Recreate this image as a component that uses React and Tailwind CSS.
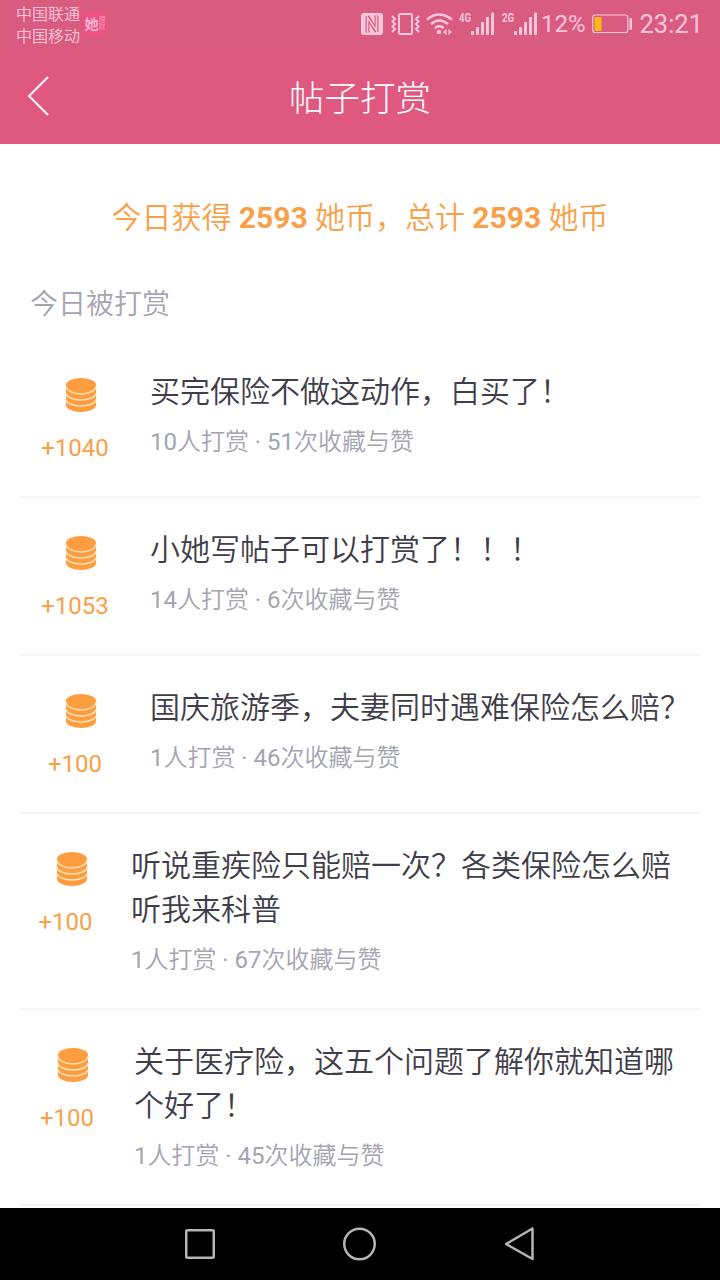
const coinPosts = [
  {
    amount: '+1040',
    title: '买完保险不做这动作，白买了！',
    rewards: 10,
    likes: 51,
    width: 'w-[110px]'
  },
  {
    amount: '+1053',
    title: '小她写帖子可以打赏了！！！',
    rewards: 14,
    likes: 6,
    width: 'w-[110px]'
  },
  {
    amount: '+100',
    title: '国庆旅游季，夫妻同时遇难保险怎么赔？',
    rewards: 1,
    likes: 46,
    width: 'w-[110px]'
  },
  {
    amount: '+100',
    title: '听说重疾险只能赔一次？各类保险怎么赔听我来科普',
    rewards: 1,
    likes: 67,
    width: 'w-[91px]'
  },
  {
    amount: '+100',
    title: '关于医疗险，这五个问题了解你就知道哪个好了！',
    rewards: 1,
    likes: 45,
    width: 'w-[94px]'
  }
];

function Signal({ label }) {
  return (
    <svg width="36" height="26" viewBox="0 0 36 26" fill="#fbc5dc">
      <text x="0" y="11" fontSize="12" fontWeight="700" textLength="12" lengthAdjust="spacingAndGlyphs">
        {label}
      </text>
      <rect x="12" y="20" width="3" height="4" rx="1" />
      <rect x="17" y="16" width="3" height="8" rx="1" />
      <rect x="22" y="11" width="3" height="13" rx="1" />
      <rect x="27" y="6" width="3" height="18" rx="1" />
      <rect x="32" y="1.500" width="3" height="22.500" rx="1" />
    </svg>
  );
}

function StatusBar() {
  return (
    <div className="flex h-12 items-start bg-[#d95c80] text-[#fbc5dc]">
      <div className="ml-4 mt-1 text-[16px] font-[350] leading-[21.5px]">
        <div>中国联通</div>
        <div>中国移动</div>
      </div>
      <div className="ml-[3px] mt-3 flex h-6 w-6 items-center justify-center rounded-[3px] bg-[#ee5283]">
        <span className="text-[14px] font-medium leading-none">她</span>
        <span className="w-[7px] text-[7px] leading-[7px] text-[#f79bbb]">理财</span>
      </div>
      <div className="ml-auto mr-[17px] flex h-12 items-center">
        {/* NFC */}
        <svg width="22" height="22" viewBox="0 0 22 22">
          <rect width="22" height="22" rx="3" fill="#fbc5dc" />
          <path
            d="M6.500 19.500V3.500L15.500 18.500V2.500"
            fill="none"
            stroke="#d95c80"
            strokeWidth="4"
            strokeLinejoin="bevel"
          />
          <path d="M6.500 19.500V4.500L15.500 17.500V2.500" fill="none" stroke="#fbc5dc" strokeWidth="1.600" />
        </svg>
        {/* Vibrate */}
        <svg className="ml-2" width="29" height="22" viewBox="0 0 29 22" fill="none" stroke="#fbc5dc" strokeWidth="2">
          <rect x="8" y="1" width="13" height="20" rx="1.5" />
          <path d="M1 3L4 6L1.500 8.500L4 11L1.500 13.500L4 16L1 19M28 3L25 6L27.500 8.500L25 11L27.500 13.500L25 16L28 19" />
        </svg>
        {/* Wi-Fi */}
        <svg className="ml-1.5" width="27" height="22" viewBox="0 0 27 22" fill="none" stroke="#fbc5dc" strokeWidth="2.4">
          <path d="M1 6.500Q13 -3.500 26 6.500M5 11Q13 4 22 11M9 15Q13 11.500 18 15" />
          <circle cx="13" cy="19" r="2.200" fill="#fbc5dc" stroke="none" />
          <path d="M17 19L20.500 16V22ZM26 19L22.500 16V22Z" fill="#fbc5dc" stroke="none" />
        </svg>
        <div className="ml-1.5">
          <Signal label="4G" />
        </div>
        <div className="ml-[7px]">
          <Signal label="2G" />
        </div>
        <span className="ml-[3px] text-[24px] leading-none">12%</span>
        <svg className="ml-[7px]" width="41" height="20" viewBox="0 0 41 20">
          <rect x="0.750" y="1" width="35" height="17.500" rx="2.500" fill="none" stroke="#fbc5dc" strokeWidth="1.200" />
          <rect x="2.500" y="3" width="7" height="14" rx="1" fill="#fcb814" />
          <rect x="37.500" y="4" width="2.500" height="12" rx="1" fill="#fbc5dc" />
        </svg>
        <span className="ml-[6px] mt-0.5 text-[25.5px] leading-none">23:21</span>
      </div>
    </div>
  );
}

function CoinStack() {
  return (
    <svg className="ml-3" width="32" height="36" viewBox="0 0 32 36">
      <path d="M1 8V28C1 32 8 35 16 35S31 32 31 28V8Z" fill="#fe9d3f" />
      <ellipse cx="16" cy="8" rx="15" ry="7" fill="#fe9d3f" />
      <path
        d="M1 9C1 13.500 8 17 16 17S31 13.500 31 9M1 16C1 20 8 23 16 23S31 20 31 16M1 22.500C1 26 8 29 16 29S31 26 31 22.500"
        fill="none"
        stroke="#ffe3bd"
        strokeWidth="1.500"
      />
    </svg>
  );
}

function PostRow({ post }) {
  return (
    <li className="flex border-b-2 border-[#f5f5f5] py-[30px]">
      <div className={`flex shrink-0 flex-col items-center pt-[7px] ${post.width}`}>
        <CoinStack />
        <span className="mt-[17px] text-[24px] leading-9 text-[#f99f48]">{post.amount}</span>
      </div>
      <div className="ml-5 min-w-0 flex-1">
        <h2 className="w-[550px] text-[30px] font-[350] leading-[44px] text-[#3f3d49]">{post.title}</h2>
        <p className="mt-2.5 text-[24px] font-[350] leading-9 text-[#a5a4b1]">
          <span className="font-normal">{post.rewards}</span>人打赏 <span className="font-normal">·</span>{' '}
          <span className="font-normal">{post.likes}</span>次收藏与赞
        </p>
      </div>
    </li>
  );
}

function NavBar() {
  return (
    <div className="flex h-[72px] items-center justify-center bg-black">
      <svg width="352" height="36" viewBox="0 0 352 36" fill="none" stroke="#b5b5b5" strokeWidth="2.500" strokeLinejoin="round">
        <rect x="2.250" y="4.250" width="27.500" height="27.500" rx="1" />
        <circle cx="175.500" cy="18" r="15.250" />
        <path d="M322 18L348.500 2.500V33Z" />
      </svg>
    </div>
  );
}

export default function App() {
  return (
    <div className="flex h-[1280px] w-[720px] flex-col overflow-hidden bg-white font-[Roboto,'Noto_Sans_CJK_SC',sans-serif]">
      <StatusBar />
      <header className="grid h-24 grid-cols-[1fr_auto_1fr] items-center bg-[#df5880] text-white">
        <svg className="ml-[27px]" width="24" height="42" viewBox="0 0 24 42" fill="none" stroke="white" strokeWidth="2">
          <path d="M21 2L2 21L21 40" />
        </svg>
        <h1 className="pt-[7px] text-[35.5px] font-light leading-none">帖子打赏</h1>
      </header>
      <main className="flex-1 px-5">
        <p className="mt-[51px] text-center text-[30px] font-[350] leading-[46px] text-[#f99f48]">
          今日获得 <b className="font-bold">2593</b> 她币，总计 <b className="font-bold">2593</b> 她币
        </p>
        <p className="ml-2.5 mt-11 text-[28px] font-[350] leading-10 text-[#a5a4b1]">今日被打赏</p>
        <ul className="mt-[15px]">
          {coinPosts.map((post) => (
            <PostRow key={post.title} post={post} />
          ))}
        </ul>
      </main>
      <NavBar />
    </div>
  );
}
